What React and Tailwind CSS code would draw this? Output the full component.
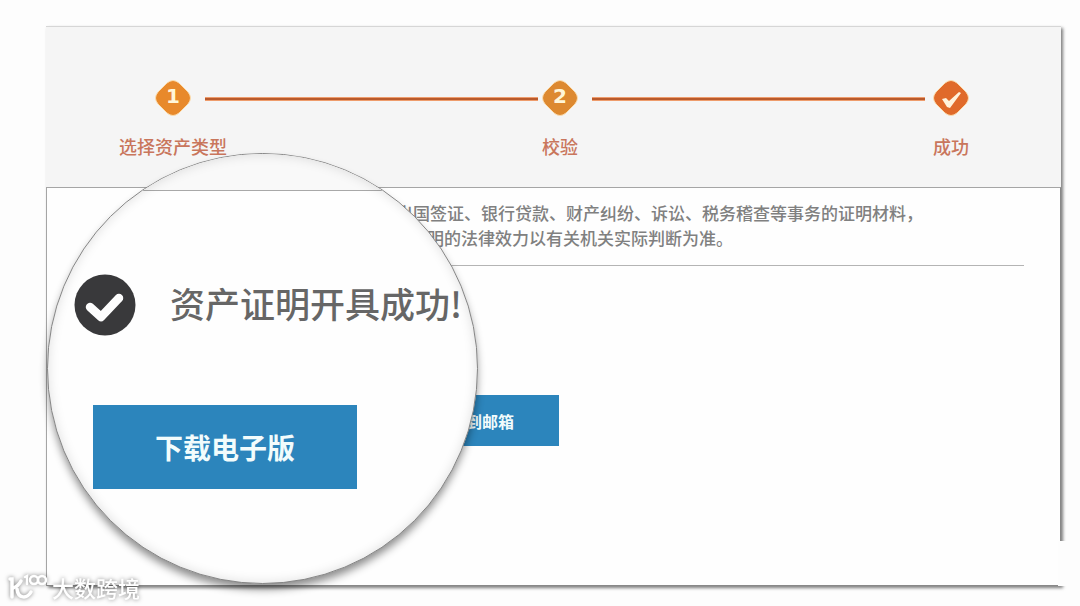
import React from "react";

function StepBadge({ label, color, children }) {
  return (
    <li className="flex w-9 shrink-0 flex-col items-center gap-[18px]">
      <svg viewBox="0 0 36 36" className="size-9" aria-hidden="true">
        <path
          d="M12 3 Q18 -2 24 3 L33 12 Q38 18 33 24 L24 33 Q18 38 12 33 L3 24 Q-2 18 3 12 Z"
          fill={color}
          stroke="#fbdcae"
          strokeWidth="1"
        />
        {children}
      </svg>
      <span className="text-lg leading-6 font-medium whitespace-nowrap text-[#c9765c]">{label}</span>
    </li>
  );
}

function StepLine({ className }) {
  return (
    <li
      aria-hidden="true"
      className={`mt-[17px] ml-[14px] h-1 flex-1 border-y border-[#ee9c6c] bg-[#b95a2c] ${className}`}
    />
  );
}

function Steps() {
  return (
    <header className="h-[161px] border-t border-[#d6d6d6] bg-[#f5f5f5] pt-[53px] pr-[92px] pl-[109px]">
      <ol className="flex items-start">
        <StepBadge label="选择资产类型" color="#e8892b">
          <text x="18" y="23" textAnchor="middle" fontSize="20" fontWeight="700" fill="#fff6d8" className="font-['DejaVu_Sans',sans-serif]">
            1
          </text>
        </StepBadge>
        <StepLine className="mr-1" />
        <StepBadge label="校验" color="#dd8930">
          <text x="18" y="23" textAnchor="middle" fontSize="20" fontWeight="700" fill="#fff6d8" className="font-['DejaVu_Sans',sans-serif]">
            2
          </text>
        </StepBadge>
        <StepLine className="mr-2" />
        <StepBadge label="成功" color="#e06a2a">
          <path d="M9 19 L13 18 L16 21 L26 12 L28 13 L17 28 L14 27 Z" fill="#fff3dc" />
        </StepBadge>
      </ol>
    </header>
  );
}

function Magnifier() {
  return (
    <section className="absolute top-[127px] left-px size-[431px] overflow-hidden rounded-full border border-[#858585] bg-[#fefefe] shadow-[0_6px_8px_-1px_rgba(0,0,0,0.45)]">
      <div className="h-[37px] border-b border-[#a8a8a8] bg-[#f9f9f9]" />
      <div className="mt-[83px] flex items-center gap-[34px] pl-[26px]">
        <svg viewBox="0 0 62 62" className="size-[62px] shrink-0" aria-hidden="true">
          <circle cx="31" cy="31" r="30.5" fill="#39393b" />
          <path
            d="M16 33 L27 43 L45 24"
            fill="none"
            stroke="#fdfdfd"
            strokeWidth="8.5"
            strokeLinecap="round"
            strokeLinejoin="round"
          />
        </svg>
        <h1 className="pb-1 text-[35px] leading-[44px] font-medium whitespace-nowrap text-[#666]">资产证明开具成功!</h1>
      </div>
      <button
        type="button"
        className="mt-[69px] ml-[45px] block h-[84px] w-[264px] bg-[#2c85bc] text-[28px] leading-9 font-bold text-[#f2fcfc]"
      >
        下载电子版
      </button>
      <div className="pointer-events-none absolute inset-0 rounded-full shadow-[inset_0_0_12px_rgba(0,0,0,0.13)]" />
    </section>
  );
}

function Watermark() {
  return (
    <div className="absolute bottom-[6px] left-2 flex items-center gap-1 drop-shadow-[0_0_2px_rgba(0,0,0,0.5)]">
      <svg viewBox="0 0 40 28" className="h-7 w-10" fill="none" stroke="#fff" strokeWidth="3.5" strokeLinecap="round" aria-hidden="true">
        <path d="M2 6 H4 V24" />
        <path d="M13 8 C11 12 8 14 5 15" />
        <path d="M9 16 C10 26 19 26 23 19" />
        <path d="M17 4 L19 3 V11" strokeWidth="2.5" />
        <circle cx="26" cy="7" r="4" strokeWidth="2.5" />
        <circle cx="34" cy="7" r="4" strokeWidth="2.5" />
      </svg>
      <span className="text-[22px] leading-6 font-medium text-white">大数跨境</span>
    </div>
  );
}

export default function App() {
  return (
    <div className="relative min-h-screen bg-[#fdfdfd] pt-[26px] pr-[19px] pb-[21px] pl-[46px] font-['Noto_Sans_CJK_SC',sans-serif]">
      <main className="relative shadow-[2px_2px_3px_rgba(0,0,0,0.5)]">
        <Steps />
        <div className="border border-[#a5a5a5] border-r-[#888] border-b-[#888] bg-[#fefefe] pt-3 pb-[139px]">
          <div className="mr-9 ml-9 border-b border-[#b4b4b4] pb-[15px] text-[17px] leading-[25px] font-medium whitespace-nowrap text-[#808080]">
            <p className="pl-[313px]">出国签证、银行贷款、财产纠纷、诉讼、税务稽查等事务的证明材料，</p>
            <p className="pl-[327px]">证明的法律效力以有关机关实际判断为准。</p>
          </div>
          <button
            type="button"
            className="mt-[129px] ml-[342px] block h-[51px] w-[170px] bg-[#2c85bc] text-base font-bold text-[#f2fcfc]"
          >
            发送到邮箱
          </button>
        </div>
        <div className="absolute -right-[6px] bottom-0 h-[45px] w-[9px] bg-[#fdfdfd]" />
        <Magnifier />
      </main>
      <Watermark />
    </div>
  );
}
